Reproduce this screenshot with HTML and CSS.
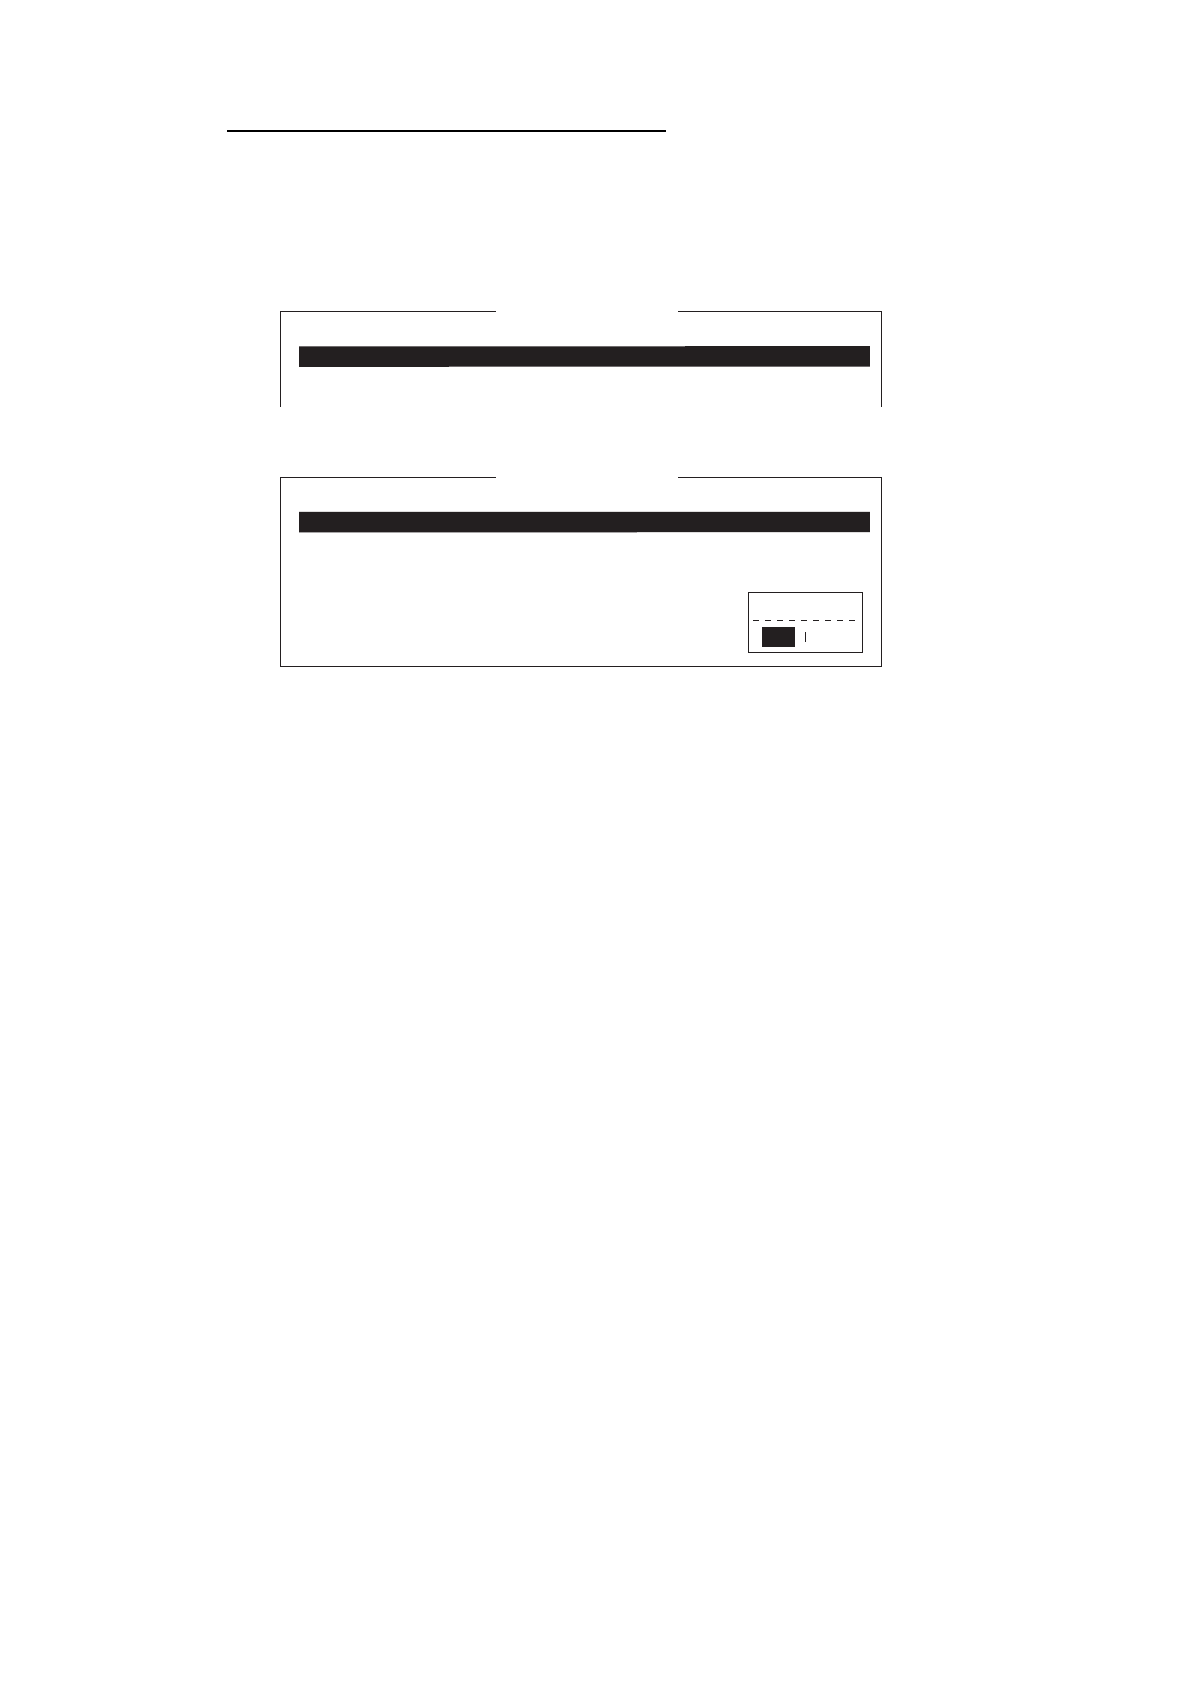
FILE: index.html
```
<!DOCTYPE html>
<html lang="en">
<head>
    <meta charset="UTF-8">
    <meta name="viewport" content="width=device-width, initial-scale=1.0">
    <title>Menu</title>
    <link rel="stylesheet" href="styles.css">
</head>
<body>
    <main class="page">
        <hr class="title-rule">
        <div class="screens">
            <section class="screen screen-open">
                <div class="screen-top"></div>
                <div class="bar bar-first"></div>
            </section>
            <section class="screen screen-closed">
                <div class="screen-top"></div>
                <div class="bar bar-second"></div>
                <div class="prompt">
                    <div class="prompt-divider"></div>
                    <div class="prompt-options">
                        <div class="option-selected"></div>
                        <div class="option-separator"></div>
                    </div>
                </div>
            </section>
        </div>
    </main>
</body>
</html>
```

FILE: styles.css
```
* {
    box-sizing: border-box;
}
body {
    margin: 0;
    background-color: #fff;
    font-family: "Liberation Sans", Arial, sans-serif;
}
.page {
    padding: 130px 308px 40px 227px;
}
.title-rule {
    width: 439px;
    max-width: 100%;
    height: 2px;
    margin: 0;
    border: none;
    background-color: #000;
}
.screens {
    display: flex;
    flex-direction: column;
    gap: 70px;
    margin: 179px 0 0 53px;
}
.screen {
    border: 1px solid #231f20;
    border-top: none;
}
.screen-open {
    border-bottom: none;
    padding-bottom: 40px;
}
.screen-closed {
    padding-bottom: 13px;
}

/* top edge, with a gap for the screen title */
.screen-top {
    display: flex;
    gap: 182px;
    height: 1px;
}
.screen-top::before,
.screen-top::after {
    content: "";
    background-color: #231f20;
}
.screen-top::before {
    width: 215px;
}
.screen-top::after {
    flex: 1;
}

/* highlighted menu line */
.bar {
    height: 21px;
    margin: 34px 11px 0 18px;
    background-color: #231f20;
    background-repeat: no-repeat;
}
.bar-first {
    background-image: linear-gradient(#706c6d, #706c6d), linear-gradient(#706c6d, #706c6d);
    background-size: 386px 1px, calc(100% - 150px) 1px;
    background-position: left top, right bottom;
}
.bar-second {
    background-image: linear-gradient(#a7a5a6, #a7a5a6), linear-gradient(#dedddd, #dedddd);
    background-size: 338px 1px, 100% 1px;
    background-position: left bottom, left bottom;
    box-shadow: 0 -1px #dedddd;
}

/* confirmation box */
.prompt {
    width: 115px;
    height: 61px;
    margin: 59px 18px 0 auto;
    padding: 27px 7px 0 4px;
    border: 1px solid #231f20;
}
.prompt-divider {
    height: 1px;
    background: repeating-linear-gradient(to right, #231f20 0 6px, transparent 6px 12px);
}
.prompt-options {
    display: flex;
    align-items: center;
    gap: 10px;
    margin: 6px 0 0 9px;
}
.option-selected {
    width: 33px;
    height: 20px;
    background-color: #231f20;
}
.option-separator {
    width: 1px;
    height: 10px;
    background-color: #231f20;
}
```
